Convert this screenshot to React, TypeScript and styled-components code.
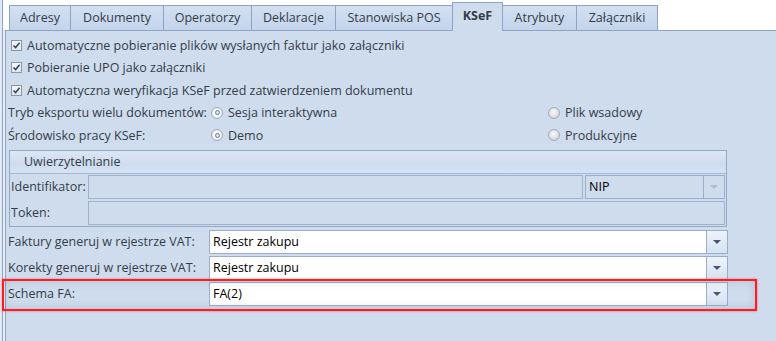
import React from 'react';
import styled, { createGlobalStyle, css } from 'styled-components';

const Global = createGlobalStyle`
  html, body { margin: 0; padding: 0; background: #ffffff; }
  body { font-family: "Open Sans", "Noto Sans", sans-serif; }
`;

const TEXT = '#343c48';
const BORDER = '#8fa4c3';
const PANEL = '#cfdcee';

const Screen = styled.div`
  position: relative;
  width: 776px;
  height: 341px;
  overflow: hidden;
  background: #e1e9f4;
  display: flex;
  font-size: 12.5px;
  color: ${TEXT};
`;

const Frame = styled.div`
  margin-left: 2px;
  border-left: 1px solid ${BORDER};
  flex: 1;
  display: flex;
  flex-direction: column;
  background: #e6edf6;
`;

const TabStrip = styled.div`
  height: 30px;
  display: flex;
  align-items: flex-end;
  padding-left: 6px;
  background: #ffffff;
  position: relative;
  z-index: 2;
`;

const Tab = styled.div<{ $w: number; $active?: boolean }>`
  width: ${(p) => p.$w}px;
  box-sizing: border-box;
  height: 25px;
  margin-right: -1px;
  border: 1px solid ${BORDER};
  border-bottom: none;
  display: flex;
  align-items: center;
  justify-content: center;
  background: linear-gradient(#d3e0f1, #c3d4eb);
  white-space: nowrap;
  padding-bottom: 1px;
  ${(p) =>
    p.$active &&
    css`
      height: 29px;
      margin-bottom: -1px;
      background: ${PANEL};
      font-weight: 700;
      padding-bottom: 3px;
      position: relative;
      z-index: 1;
    `}
`;

const Panel = styled.div`
  flex: 1;
  margin-left: 2px;
  border-top: 1px solid ${BORDER};
  border-left: 1px solid ${BORDER};
  background: ${PANEL};
  padding: 3px 0 0 2px;
  display: flex;
  flex-direction: column;
`;

const CheckRow = styled.div`
  height: 22.5px;
  display: flex;
  align-items: center;
  gap: 5px;
  padding-left: 3px;
  white-space: nowrap;
`;

const CheckBox = styled.span`
  width: 11px;
  height: 11px;
  box-sizing: border-box;
  border: 1px solid #8c97a6;
  background: linear-gradient(#f6f8fb, #dfe5ec);
  display: flex;
  align-items: center;
  justify-content: center;
`;

const RadioRow = styled.div`
  height: 22.5px;
  display: flex;
  align-items: center;
  white-space: nowrap;
`;

const RowLabel = styled.span<{ $w: number }>`
  width: ${(p) => p.$w}px;
  flex-shrink: 0;
  white-space: nowrap;
`;

const RadioOption = styled.span<{ $w?: number }>`
  ${(p) => (p.$w ? `width: ${p.$w}px;` : '')}
  display: flex;
  align-items: center;
  gap: 5px;
`;

const Radio = styled.span<{ $on?: boolean }>`
  width: 12px;
  height: 12px;
  box-sizing: border-box;
  border-radius: 50%;
  border: 1px solid #a3abb6;
  display: flex;
  align-items: center;
  justify-content: center;
  background: ${(p) =>
    p.$on ? 'radial-gradient(circle, #f8fafc 0 55%, #e3e8ee 70%)' : 'radial-gradient(circle at 45% 40%, #fbfbfb 0, #dcdfe4 55%, #c2c8d0 100%)'};
  &::after {
    content: '';
    display: ${(p) => (p.$on ? 'block' : 'none')};
    width: 5px;
    height: 5px;
    border-radius: 50%;
    box-sizing: border-box;
    border: 1px solid #6c7c96;
    background: #dbe4f0;
  }
`;

const GroupBox = styled.div`
  margin: 3px 0 0 1px;
  width: 718px;
  box-sizing: border-box;
  border: 1px solid #93a8c6;
  display: flex;
  flex-direction: column;
`;

const GroupHeader = styled.div`
  height: 22px;
  border-bottom: 1px solid #a6b9d3;
  background: linear-gradient(#dbe6f5, #cfdcef 60%, #d5e2f3);
  padding-left: 14px;
  display: flex;
  align-items: center;
`;

const GroupBody = styled.div`
  padding: 1px 1px 1px 0;
  display: flex;
  flex-direction: column;
  gap: 2px;
`;

const FieldRow = styled.div`
  height: 24px;
  display: flex;
  align-items: center;
`;

const FieldLabel = styled.span`
  width: 77px;
  padding-left: 1px;
  flex-shrink: 0;
  white-space: nowrap;
`;

const Input = styled.div`
  flex: 1;
  height: 24px;
  box-sizing: border-box;
  border: 1px solid #9fb1cb;
`;

const Combo = styled.div<{ $w: number; $disabled?: boolean; $gap?: number }>`
  width: ${(p) => p.$w}px;
  margin-left: ${(p) => p.$gap ?? 0}px;
  height: 24px;
  box-sizing: border-box;
  border: 1px solid #9aaecb;
  background: ${(p) => (p.$disabled ? 'transparent' : '#ffffff')};
  display: flex;
  align-items: stretch;
  color: #000;
`;

const ComboText = styled.span`
  flex: 1;
  padding-left: 3px;
  display: flex;
  align-items: center;
`;

const DropButton = styled.span<{ $disabled?: boolean }>`
  width: 20px;
  border-left: 1px solid #9aaecb;
  display: flex;
  align-items: center;
  justify-content: center;
  background: ${(p) => (p.$disabled ? 'transparent' : 'linear-gradient(#eef3fa, #d6e2f2)')};
  &::after {
    content: '';
    width: 0;
    height: 0;
    border-left: 4px solid transparent;
    border-right: 4px solid transparent;
    border-top: 4px solid ${(p) => (p.$disabled ? '#b4bcc8' : '#4b5672')};
    margin-top: 1px;
  }
`;

const FormRows = styled.div`
  margin-top: 3px;
  display: flex;
  flex-direction: column;
  gap: 2px;
`;

const FormRow = styled.div`
  height: 24px;
  display: flex;
  align-items: center;
`;

const Highlight = styled.div`
  position: absolute;
  left: 2px;
  top: 279px;
  width: 755px;
  height: 32px;
  box-sizing: border-box;
  border: 2px solid #ff1c1c;
  box-shadow: 0 0 2px rgba(255, 40, 40, 0.6), inset 0 0 8px rgba(70, 85, 110, 0.22);
  pointer-events: none;
`;

const tabs: { label: string; w: number; active?: boolean }[] = [
  { label: 'Adresy', w: 62 },
  { label: 'Dokumenty', w: 94 },
  { label: 'Operatorzy', w: 89 },
  { label: 'Deklaracje', w: 85 },
  { label: 'Stanowiska POS', w: 118 },
  { label: 'KSeF', w: 51, active: true },
  { label: 'Atrybuty', w: 75 },
  { label: 'Załączniki', w: 82 },
];

const Check = () => (
  <CheckBox>
    <svg width="9" height="9" viewBox="0 0 9 9">
      <path d="M1.5 4.5 L3.6 6.6 L7.6 1.8" fill="none" stroke="#34425c" strokeWidth="1.5" />
    </svg>
  </CheckBox>
);

export default function App() {
  return (
    <>
      <Global />
      <Screen>
        <Frame>
          <TabStrip>
            {tabs.map((t) => (
              <Tab key={t.label} $w={t.w} $active={t.active}>
                {t.label}
              </Tab>
            ))}
          </TabStrip>
          <Panel>
            <CheckRow>
              <Check />
              Automatyczne pobieranie plików wysłanych faktur jako załączniki
            </CheckRow>
            <CheckRow>
              <Check />
              Pobieranie UPO jako załączniki
            </CheckRow>
            <CheckRow>
              <Check />
              Automatyczna weryfikacja KSeF przed zatwierdzeniem dokumentu
            </CheckRow>
            <RadioRow>
              <RowLabel $w={203}>Tryb eksportu wielu dokumentów:</RowLabel>
              <RadioOption $w={337}>
                <Radio $on />
                Sesja interaktywna
              </RadioOption>
              <RadioOption>
                <Radio />
                Plik wsadowy
              </RadioOption>
            </RadioRow>
            <RadioRow>
              <RowLabel $w={203}>Środowisko pracy KSeF:</RowLabel>
              <RadioOption $w={337}>
                <Radio $on />
                Demo
              </RadioOption>
              <RadioOption>
                <Radio />
                Produkcyjne
              </RadioOption>
            </RadioRow>
            <GroupBox>
              <GroupHeader>Uwierzytelnianie</GroupHeader>
              <GroupBody>
                <FieldRow>
                  <FieldLabel>Identifikator:</FieldLabel>
                  <Input />
                  <Combo $w={140} $gap={2} $disabled>
                    <ComboText>NIP</ComboText>
                    <DropButton $disabled />
                  </Combo>
                </FieldRow>
                <FieldRow>
                  <FieldLabel>Token:</FieldLabel>
                  <Input />
                </FieldRow>
              </GroupBody>
            </GroupBox>
            <FormRows>
              <FormRow>
                <RowLabel $w={201}>Faktury generuj w rejestrze VAT:</RowLabel>
                <Combo $w={519}>
                  <ComboText>Rejestr zakupu</ComboText>
                  <DropButton />
                </Combo>
              </FormRow>
              <FormRow>
                <RowLabel $w={201}>Korekty generuj w rejestrze VAT:</RowLabel>
                <Combo $w={519}>
                  <ComboText>Rejestr zakupu</ComboText>
                  <DropButton />
                </Combo>
              </FormRow>
              <FormRow>
                <RowLabel $w={201}>Schema FA:</RowLabel>
                <Combo $w={519}>
                  <ComboText>FA(2)</ComboText>
                  <DropButton />
                </Combo>
              </FormRow>
            </FormRows>
          </Panel>
        </Frame>
        <Highlight />
      </Screen>
    </>
  );
}
